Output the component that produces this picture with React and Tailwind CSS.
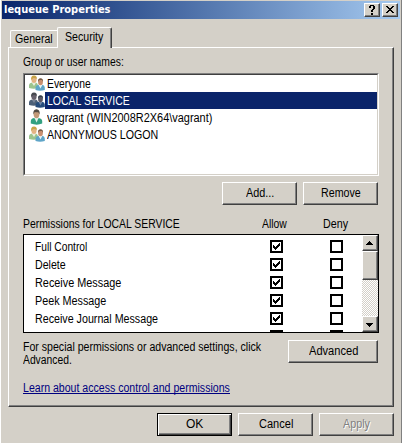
import { useLayoutEffect, useRef, useState } from "react";

const raised =
  "border border-t-white border-l-white border-r-[#404040] border-b-[#404040] bg-[#d4d0c8] shadow-[inset_-1px_-1px_0_#808080]";

// Condenses a line of text to the given width.
function Fit({ w, children, className = "" }) {
  const ref = useRef(null);
  const [scale, setScale] = useState(1);
  useLayoutEffect(() => {
    setScale(w / ref.current.offsetWidth);
  }, [w]);
  return (
    <span className={"block h-[14px] shrink-0 leading-[14px] " + className} style={{ width: w }}>
      <span
        ref={ref}
        className="inline-block origin-left whitespace-nowrap align-top"
        style={{ transform: `scaleX(${scale})` }}
      >
        {children}
      </span>
    </span>
  );
}

function Button({ label, w, className = "w-[75px]", disabled, primary }) {
  return (
    <button
      className={
        "flex h-[23px] justify-center " +
        (primary
          ? "border border-black bg-[#d4d0c8] pt-[3px] shadow-[inset_1px_1px_0_#fff,inset_-1px_-1px_0_#404040,inset_-2px_-2px_0_#808080] "
          : raised + " pt-[3px] ") +
        (disabled ? "text-[#808080] [text-shadow:1px_1px_0_#fff] " : "") +
        className
      }
    >
      <Fit w={w}>{label}</Fit>
    </button>
  );
}

function Group({ selected }) {
  return (
    <svg width="16" height="16" viewBox="0 0 16 16" className="shrink-0">
      <path d="M0 13V10.500Q0 8 3 7.500L5 9 7 7.500Q8.500 8 9 10V13Q5 14.500 0 13Z" fill={selected ? "#4c6078" : "#9cc48e"} />
      <path d="M3 8L5 11 6.800 8Z" fill={selected ? "#788498" : "#e8f0e0"} />
      <ellipse cx="5" cy="4.500" rx="2.600" ry="3.500" fill={selected ? "#66616c" : "#e3b483"} />
      <path d="M2.200 5Q1.500.5 5 .5 8.300.6 7.700 4 6 2.800 4.600 2.900 3.400 3.400 2.200 5Z" fill={selected ? "#46494f" : "#c8a448"} />
      <path d="M6.500 15V12.500Q6.700 10.200 9.500 9.800L11.500 11.500 13.500 9.800Q15.700 10.500 15.800 12.500V15Q11 16.300 6.500 15Z" fill={selected ? "#244b7b" : "#5fa5c8"} />
      <path d="M9.600 9.900L11.500 13.500 13.300 9.900Z" fill={selected ? "#7188a9" : "#e7f5fa"} />
      <ellipse cx="11.500" cy="7" rx="2.400" ry="3.200" fill={selected ? "#5c5965" : "#c98f70"} />
      <path d="M9 7Q8.600 3.400 11.500 3.300 14.400 3.400 14 7L13 5.100Q11.300 5 10 5.200Z" fill={selected ? "#303b48" : "#755a45"} />
    </svg>
  );
}

function Person() {
  return (
    <svg width="16" height="16" viewBox="0 0 16 16" className="shrink-0">
      <path d="M1.800 14.500V12Q2 9.400 5.300 9L7.500 10.500 9.700 9Q13 9.500 13.200 12V14.500Q8 16.800 1.800 14.500Z" fill="#32a080" />
      <path d="M5.500 9L7.600 13.500 9.500 9Z" fill="#e4f3eb" />
      <ellipse cx="7.500" cy="5" rx="2.900" ry="4.200" fill="#c39a78" />
      <path d="M4.500 5.500Q3.700.5 7.500.3 11.300.5 10.500 5.500L9.400 3.300Q7.400 3.500 5.700 3Z" fill="#514b43" />
    </svg>
  );
}

function Check({ on }) {
  return (
    <span className="block size-[13px] shrink-0 border-2 border-black bg-white">
      {on && (
        <svg width="9" height="9" viewBox="0 0 9 9" shapeRendering="crispEdges">
          <path d="M1 3h1v3h-1zM2 4h1v3h-1zM3 5h1v3h-1zM4 4h1v3h-1zM5 3h1v3h-1zM6 2h1v3h-1zM7 1h1v3h-1z" fill="#000" />
        </svg>
      )}
    </span>
  );
}

const users = [
  ["Everyone", 44],
  ["LOCAL SERVICE", 83],
  ["vagrant (WIN2008R2X64\\vagrant)", 165],
  ["ANONYMOUS LOGON", 111],
];

const permissions = [
  ["Full Control", 52],
  ["Delete", 31],
  ["Receive Message", 86],
  ["Peek Message", 71],
  ["Receive Journal Message", 123],
  ["", 1],
];

export default function App() {
  return (
    <div className="h-[443px] w-[402px] overflow-hidden border-r border-l border-r-[#808080] border-l-white bg-[#d4d0c8] pt-px font-['Liberation_Sans',Arial,sans-serif] text-[12px] text-black">
      <header className="mr-px ml-px flex h-[18px] bg-linear-to-r from-[#0a246a] to-[#a6caf0] pt-[2px] pr-[2px] pl-[2px]">
        <Fit w={107} className="font-['DejaVu_Sans_Condensed','DejaVu_Sans',sans-serif] text-[11px] font-bold text-white">
          lequeue Properties
        </Fit>
        <div className="ml-auto flex gap-[2px]">
          <button className={"h-[14px] w-4 " + raised}>
            <svg width="14" height="12" viewBox="0 0 14 12" shapeRendering="crispEdges">
              <path d="M5 1h4v1h-4zM4 2h2v2h-2zM8 2h2v3h-2zM7 5h2v1h-2zM6 6h2v2h-2zM6 9h2v2h-2z" />
            </svg>
          </button>
          <button className={"h-[14px] w-4 " + raised}>
            <svg width="14" height="12" viewBox="0 0 14 12" shapeRendering="crispEdges">
              <path d="M3 2h2v1h-2zM9 2h2v1h-2zM4 3h2v1h-2zM8 3h2v1h-2zM5 4h4v1h-4zM6 5h2v1h-2zM5 6h4v1h-4zM4 7h2v1h-2zM8 7h2v1h-2zM3 8h2v1h-2zM9 8h2v1h-2z" />
            </svg>
          </button>
        </div>
      </header>

      <div className="flex h-[28px] items-end pl-[9px]">
        <div className="h-[17px] w-[47px] rounded-tl-[2px] border-t border-l border-white pt-px pl-1">
          <Fit w={38}>General</Fit>
        </div>
        <div className="relative -mb-px h-[21px] w-[55px] rounded-t-[2px] border-t border-r border-l border-t-white border-r-[#404040] border-l-white bg-[#d4d0c8] pt-[2px] pl-[7px] shadow-[inset_-1px_0_0_#808080]">
          <Fit w={38}>Security</Fit>
        </div>
      </div>

      <main className={"ml-[7px] flex h-[360px] w-[386px] flex-col pt-[7px] pl-[14px] " + raised}>
        <Fit w={101}>Group or user names:</Fit>
        <div className="mt-[4px] h-[103px] w-[356px] shrink-0 border border-t-[#808080] border-r-white border-b-white border-l-[#808080] bg-white">
          <div className="h-[101px] border border-t-[#404040] border-r-[#d4d0c8] border-b-[#d4d0c8] border-l-[#404040]">
            {users.map(([name, w], i) => (
              <div key={name} className="flex h-[17px] pl-[4px]">
                {i === 2 ? <Person /> : <Group selected={i === 1} />}
                <div className={"flex-1 pt-[2px] pl-[2px] " + (i === 1 ? "bg-[#0a246a] text-white" : "")}>
                  <Fit w={w}>{name}</Fit>
                </div>
              </div>
            ))}
          </div>
        </div>

        <div className="mt-[6px] flex gap-[6px] pl-[199px]">
          <Button label="Add..." w={28} />
          <Button label="Remove" w={40} />
        </div>

        <div className="mt-[12px] flex">
          <Fit w={157}>Permissions for LOCAL SERVICE</Fit>
          <Fit w={25} className="ml-[82px]">Allow</Fit>
          <Fit w={25} className="ml-[36px]">Deny</Fit>
        </div>
        <div className="mt-[3px] flex h-[99px] w-[356px] shrink-0 border border-black bg-white">
          <div className="h-[97px] flex-1 overflow-hidden pt-[5px] pl-[11px]">
            {permissions.map(([name, w], i) => (
              <div key={i} className="flex h-[18px]">
                <div className="w-[235px]">
                  <Fit w={w}>{name || "\u00a0"}</Fit>
                </div>
                <Check on />
                <div className="w-[47px]" />
                <Check />
              </div>
            ))}
          </div>
          <div className="flex h-[97px] w-4 flex-col bg-[repeating-conic-gradient(#fff_0%_25%,#d4d0c8_0%_50%)] bg-size-[2px_2px]">
            <button className={"h-4 w-4 " + raised}>
              <svg width="14" height="14" viewBox="0 0 14 14" shapeRendering="crispEdges">
                <path d="M6 5h1v1h-1zM5 6h3v1h-3zM4 7h5v1h-5zM3 8h7v1h-7z" />
              </svg>
            </button>
            <div className={"h-[29px] w-4 " + raised} />
            <button className={"mt-auto h-4 w-4 " + raised}>
              <svg width="14" height="14" viewBox="0 0 14 14" shapeRendering="crispEdges">
                <path d="M3 6h7v1h-7zM4 7h5v1h-5zM5 8h3v1h-3zM6 9h1v1h-1z" />
              </svg>
            </button>
          </div>
        </div>

        <div className="mt-[7px] flex h-[41px]">
          <div className="w-[265px]">
            <Fit w={238} className="-mb-px">For special permissions or advanced settings, click</Fit>
            <Fit w={49}>Advanced.</Fit>
          </div>
          <Button label="Advanced" w={49} className="w-[90px]" />
        </div>
        <a className="w-[207px] border-b border-[#000080] text-[#000080]">
          <Fit w={207} className="-mb-[2px]">Learn about access control and permissions</Fit>
        </a>
      </main>

      <footer className="mt-[6px] flex gap-[6px] pl-[156px]">
        <Button label="OK" w={17} primary />
        <Button label="Cancel" w={34} />
        <Button label="Apply" w={27} disabled />
      </footer>
    </div>
  );
}
